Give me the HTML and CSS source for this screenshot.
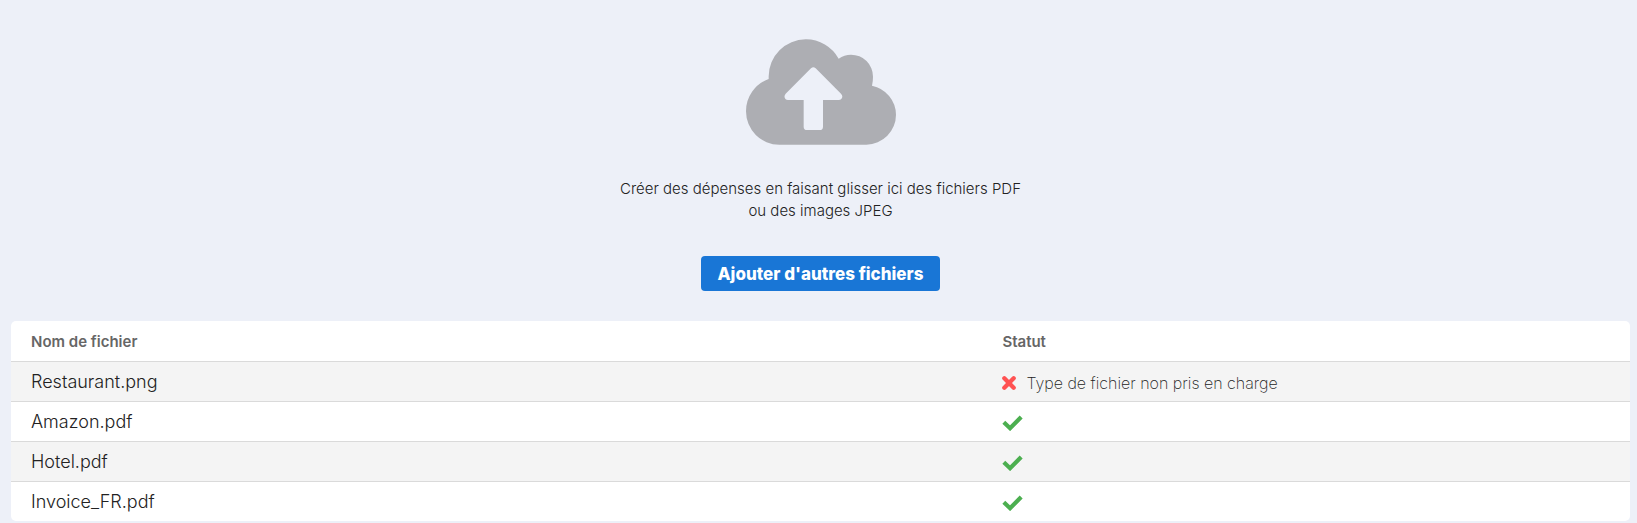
FILE: index.html
```html
<!DOCTYPE html>
<html lang="fr">
<head>
    <meta charset="UTF-8">
    <meta name="viewport" content="width=device-width, initial-scale=1.0">
    <title>Ajouter des fichiers</title>
    <link rel="stylesheet" href="styles.css">
</head>
<body>
    <!-- Shared status icons -->
    <svg class="icon-defs" aria-hidden="true">
        <symbol id="check" viewBox="0 0 60 46">
            <path d="M5 21 23 38 55 6" fill="none" stroke="#4caf50" stroke-width="12"/>
        </symbol>
        <symbol id="cross" viewBox="0 0 42 42">
            <path d="M7 7 35 35M35 7 7 35" fill="none" stroke="#ff5252" stroke-width="13" stroke-linecap="round"/>
        </symbol>
    </svg>

    <div class="container">
        <!-- Drop zone -->
        <div class="dropzone">
            <svg class="cloud" viewBox="47 42 450 316" aria-hidden="true">
                <path fill="#adaeb3" fill-rule="evenodd" d="M147 358A100 100 0 0 1 47 258A103 103 0 0 1 115 161V153A111 111 0 0 1 226 42A112 112 0 0 1 325 100A66 66 0 0 1 362 88A66 66 0 0 1 428 154Q428 168 425 181A90 90 0 0 1 497 268A90 90 0 0 1 408 358ZM242 129 166 205C159 213 163 224 173 224H220V304Q220 314 230 314H268Q278 314 278 304V224H325C335 224 340 213 332 205L256 129Q249 122 242 129Z"/>
            </svg>
            <p class="dropzone-text">Créer des dépenses en faisant glisser ici des fichiers PDF ou des images JPEG</p>
            <button type="button" class="add-button">Ajouter d'autres fichiers</button>
        </div>

        <!-- File list -->
        <table class="files">
            <thead>
                <tr>
                    <th class="name" scope="col">Nom de fichier</th>
                    <th scope="col">Statut</th>
                </tr>
            </thead>
            <tbody>
                <tr>
                    <td>Restaurant.png</td>
                    <td>
                        <div class="status">
                            <svg class="cross" aria-hidden="true"><use href="#cross"/></svg>
                            <span>Type de fichier non pris en charge</span>
                        </div>
                    </td>
                </tr>
                <tr>
                    <td>Amazon.pdf</td>
                    <td><div class="status"><svg class="check" role="img" aria-label="OK"><use href="#check"/></svg></div></td>
                </tr>
                <tr>
                    <td>Hotel.pdf</td>
                    <td><div class="status"><svg class="check" role="img" aria-label="OK"><use href="#check"/></svg></div></td>
                </tr>
                <tr>
                    <td>Invoice_FR.pdf</td>
                    <td><div class="status"><svg class="check" role="img" aria-label="OK"><use href="#check"/></svg></div></td>
                </tr>
            </tbody>
        </table>
    </div>
</body>
</html>
```
FILE: styles.css
```css
body {
    margin: 0;
    background-color: #edf0f8;
    color: #222;
    font-family: Inter, "Open Sans", sans-serif;
    font-weight: 300;
}

.icon-defs {
    display: none;
}

.container {
    padding: 39px 7px 2px 11px;
}

/* Drop zone */
.dropzone {
    display: flex;
    flex-direction: column;
    align-items: center;
    padding-bottom: 30px;
}

.cloud {
    width: 150px;
    height: 106px;
}

.dropzone-text {
    max-width: 420px;
    margin: 33px 0 34px;
    font-size: 15px;
    line-height: 22px;
    text-align: center;
}

.add-button {
    height: 35px;
    padding: 0 17px;
    border: none;
    border-radius: 4px;
    background-color: #1976d6;
    color: #fff;
    font-family: inherit;
    font-size: 17px;
    font-weight: 800;
    cursor: pointer;
}

.add-button:hover {
    background-color: #1565c0;
}

/* File list */
.files {
    width: 100%;
    table-layout: fixed;
    border-collapse: separate;
    border-spacing: 0;
    border-radius: 5px;
    overflow: hidden;
    background-color: #fff;
}

.files th,
.files td {
    box-sizing: border-box;
    height: 40px;
    padding: 0 20px;
    text-align: left;
}

.files th {
    color: #666;
    font-size: 15px;
    font-weight: 600;
}

.files .name {
    width: 60%;
}

.files td {
    border-top: 1px solid #dadada;
    font-size: 18px;
    line-height: 24px;
}

.files tbody tr:nth-child(odd) {
    background-color: #f4f4f4;
}

.status {
    display: flex;
    align-items: center;
    gap: 10px;
    padding-top: 2px;
    font-size: 16px;
    font-weight: 200;
}

.check {
    width: 21px;
    height: 16px;
}

.cross {
    width: 14px;
    height: 14px;
}
```
